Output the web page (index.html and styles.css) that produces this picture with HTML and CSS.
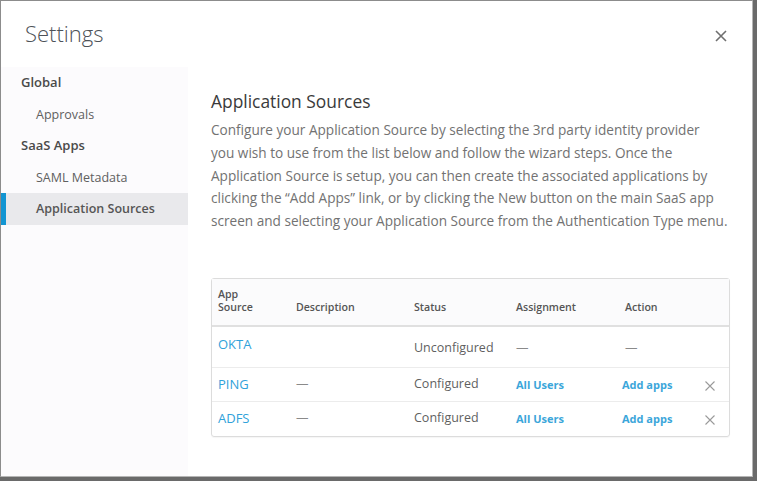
FILE: index.html
```html
<!DOCTYPE html>
<html>
<head>
<meta charset="utf-8">
<link rel="stylesheet" href="styles.css">
</head>
<body>
<div class="dialog">
  <div class="header">
    <h1 class="title">Settings</h1>
    <svg class="close" width="12" height="12" viewBox="0 0 12 12"><path d="M1 1L11 11M11 1L1 11" stroke="#6f6f6f" stroke-width="1.6" fill="none"/></svg>
  </div>
  <div class="body">
    <nav class="sidebar">
      <div class="group">Global</div>
      <div class="item">Approvals</div>
      <div class="group">SaaS Apps</div>
      <div class="item">SAML Metadata</div>
      <div class="item active">Application Sources</div>
    </nav>
    <main class="main">
      <h2 class="heading">Application Sources</h2>
      <p class="desc">Configure your Application Source by selecting the 3rd party identity provider<br>you wish to use from the list below and follow the wizard steps. Once the<br>Application Source is setup, you can then create the associated applications by<br>clicking the “Add Apps” link, or by clicking the New button on the main SaaS app<br>screen and selecting your Application Source from the Authentication Type menu.</p>
      <div class="grid">
        <div class="row head">
          <div class="cell">App<br>Source</div>
          <div class="cell">Description</div>
          <div class="cell">Status</div>
          <div class="cell">Assignment</div>
          <div class="cell">Action</div>
          <div class="cell"></div>
        </div>
        <div class="row r1">
          <div class="cell link">OKTA</div>
          <div class="cell"></div>
          <div class="cell status low">Unconfigured</div>
          <div class="cell dash low">—</div>
          <div class="cell dash low">—</div>
          <div class="cell"></div>
        </div>
        <div class="row r2">
          <div class="cell link">PING</div>
          <div class="cell dash">—</div>
          <div class="cell status">Configured</div>
          <div class="cell blink">All Users</div>
          <div class="cell blink act">Add apps</div>
          <div class="cell x"><svg width="10" height="10" viewBox="0 0 10 10"><path d="M0.5 0.5L9.5 9.5M9.5 0.5L0.5 9.5" stroke="#9a9a9a" stroke-width="1.1" fill="none"/></svg></div>
        </div>
        <div class="row r3">
          <div class="cell link">ADFS</div>
          <div class="cell dash">—</div>
          <div class="cell status">Configured</div>
          <div class="cell blink">All Users</div>
          <div class="cell blink act">Add apps</div>
          <div class="cell x"><svg width="10" height="10" viewBox="0 0 10 10"><path d="M0.5 0.5L9.5 9.5M9.5 0.5L0.5 9.5" stroke="#9a9a9a" stroke-width="1.1" fill="none"/></svg></div>
        </div>
      </div>
    </main>
  </div>
</div>
</body>
</html>
```
FILE: styles.css
```css
html, body {
  margin: 0;
  padding: 0;
}
body {
  background: #6a6a6a;
  width: 757px;
  height: 481px;
  overflow: hidden;
  font-family: "Open Sans", "DejaVu Sans", sans-serif;
}
.dialog {
  box-sizing: border-box;
  width: 753px;
  height: 477px;
  background: #fff;
  border: 1px solid #8c8c8c;
  border-right-color: #b5b5b5;
  border-bottom-color: #b5b5b5;
  display: flex;
  flex-direction: column;
}
.header {
  height: 66px;
  display: flex;
  align-items: flex-start;
  justify-content: space-between;
  flex-shrink: 0;
}
.title {
  margin: 17px 0 0 24px;
  font-size: 22px;
  line-height: 30px;
  font-weight: 300;
  color: #4d5258;
}
.close {
  margin: 29px 25px 0 0;
}
.body {
  flex: 1;
  display: flex;
  min-height: 0;
}
.sidebar {
  width: 187px;
  flex-shrink: 0;
  background: #fcfbfd;
  display: flex;
  flex-direction: column;
}
.group, .item {
  height: 31.5px;
  line-height: 31.5px;
  font-size: 13px;
  color: #565656;
  white-space: nowrap;
}
.group {
  padding-left: 20px;
  font-weight: 600;
  color: #4a4a4a;
}
.item {
  padding-left: 35px;
  font-size: 12.5px;
  color: #606060;
}
.item.active {
  background: #e9e9ec;
  font-weight: 600;
  color: #555;
  border-left: 5px solid #1395d2;
  padding-left: 30px;
}
.main {
  flex: 1;
  padding: 0 22px 0 23px;
  min-width: 0;
}
.heading {
  margin: 22px 0 6px;
  font-size: 17.4px;
  line-height: 24px;
  font-weight: 400;
  color: #3a3a3a;
}
.desc {
  margin: 0;
  font-size: 13.6px;
  line-height: 22.8px;
  color: #727272;
  white-space: nowrap;
}
.grid {
  margin-top: 45px;
  border: 1px solid #dcdcdc;
  border-radius: 3px;
  box-shadow: 0 1px 1px rgba(0,0,0,0.04);
}
.row {
  display: grid;
  grid-template-columns: 78px 118px 102px 109px 80px 1fr;
  padding-left: 6px;
  border-top: 1px solid #ececec;
  color: #565656;
}
.row.head {
  border-top: none;
  height: 46px;
  background: #fbfbfc;
  border-bottom: 2px solid #e0e0e0;
  align-items: end;
  font-weight: 600;
}
.row.head + .row {
  border-top: none;
}
.row.head .cell {
  padding-bottom: 11px;
  font-size: 10.6px;
  line-height: 13px;
  color: #555;
}
.r1 { height: 40px; }
.r2 { height: 33px; }
.r3 { height: 34px; }
.cell {
  font-size: 12.5px;
  line-height: 18px;
  padding-top: 7px;
  white-space: nowrap;
}
.r1 .cell { padding-top: 8px; }
.r1 .cell.low { padding-top: 12px; }
.link {
  color: #30a2da;
  font-size: 13px;
}
.status {
  color: #5f5f5f;
}
.dash {
  color: #8a8a8a;
}
.blink {
  color: #3ba6da;
  font-size: 11px;
  font-weight: 700;
  padding-top: 8px;
}
.blink.act {
  margin-left: -3px;
}
.x {
  padding-top: 13px;
  padding-left: 0;
}
.x svg { display: block; }
```
